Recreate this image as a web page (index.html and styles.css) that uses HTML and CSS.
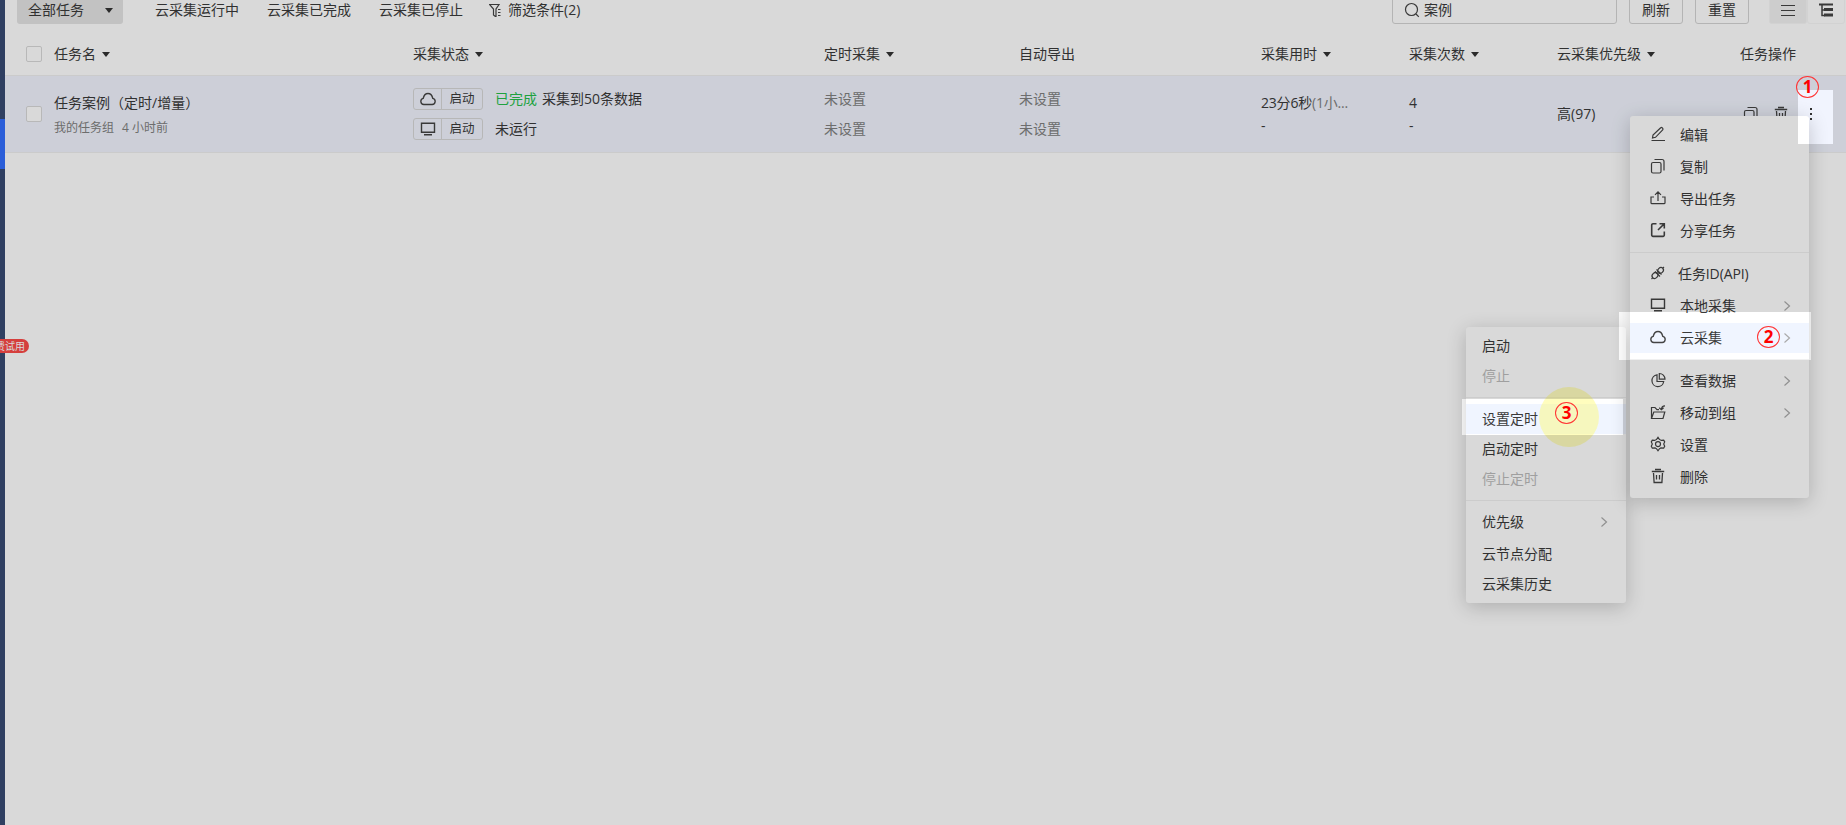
FILE: index.html
```html
<!DOCTYPE html>
<html lang="zh-CN">
<head>
<meta charset="UTF-8">
<meta name="viewport" content="width=device-width, initial-scale=1.0">
<title>任务列表</title>
<link rel="stylesheet" href="styles.css">
</head>
<body>

<!-- 图标 -->
<svg class="icon-defs" width="0" height="0">
    <symbol id="i-edit" viewBox="0 0 16 16"><path d="M2.500 12l.5-3L10.700 1.800a1 1 0 0 1 1.400 0l.6.6a1 1 0 0 1 0 1.400L5.500 11.300zM1.500 14.500h13.500"/></symbol>
    <symbol id="i-copy" viewBox="0 0 16 16"><rect x="1.500" y="4.500" width="9.500" height="10.500" rx="1.500"/><path d="M4.500 1.500h7.500a2 2 0 0 1 2 2v9"/></symbol>
    <symbol id="i-export" viewBox="0 0 16 16"><path d="M4 7H1v5.700a1 1 0 0 0 1 1h12a1 1 0 0 0 1-1V7h-3M8 11V2M5 4.800L8 1.800l3 3"/></symbol>
    <symbol id="i-share" viewBox="0 0 16 16"><path d="M6.500 1.800H3a1.300 1.300 0 0 0-1.300 1.300v10A1.300 1.300 0 0 0 3 14.400h10a1.300 1.300 0 0 0 1.300-1.300V9.500M9.500 1.800h4.800v4.700M14 2L8 8" stroke-width="1.600"/></symbol>
    <symbol id="i-api" viewBox="0 0 16 16"><ellipse cx="5" cy="10.500" rx="3.200" ry="2.600" transform="rotate(-45 5 10.500)"/><ellipse cx="10.500" cy="5.500" rx="3.200" ry="2.600" transform="rotate(-45 10.500 5.500)"/><path d="M1.500 14l1.300-1.300M12.800 3.200L14 2M5 6.500l5 5M6.500 4.500l5 5"/></symbol>
    <symbol id="i-pc" viewBox="0 0 16 16"><path d="M1.500 2.200h13v9h-13zM4 13.800h8" stroke-width="1.400"/></symbol>
    <symbol id="i-cloud" viewBox="0 0 16 16"><path d="M3.800 13.500a3.100 3.100 0 0 1-.6-6.100C4 4 5.800 2.500 8 2.500s4 1.500 4.800 4.900a3.100 3.100 0 0 1-.6 6.100z" stroke-width="1.400"/></symbol>
    <symbol id="i-pie" viewBox="0 0 16 16"><path d="M7 2.800a5.900 5.900 0 1 0 6.700 6.700H7z"/><path d="M9.300 1.500v5.700H15a5.700 5.700 0 0 0-5.700-5.700z"/></symbol>
    <symbol id="i-move" viewBox="0 0 16 16"><path d="M1.500 14.500V3.500H5l2 2.200h2M1.500 14.500l2.300-6.500H14.800L13 14.500zM15 1.800c-2.200 0-3.500.8-3.500 3.700M9.200 3.800l2.200 2 2.200-2"/></symbol>
    <symbol id="i-gear" viewBox="0 0 16 16"><path d="M6.500 3.500L8 1.400l1.500 2.100a5 5 0 0 1 1.600.9l2.600-.2 1 1.700-1 2.200 1 2.200-1 1.700-2.600-.2a5 5 0 0 1-1.600.9L8 14.800l-1.500-2.100a5 5 0 0 1-1.600-.9l-2.600.2-1-1.700 1-2.200-1-2.200 1-1.700 2.600.2a5 5 0 0 1 1.600-.9z"/><circle cx="8" cy="8.100" r="2.500"/></symbol>
    <symbol id="i-trash" viewBox="0 0 16 16"><path d="M1.800 3.500h12.400M5 1.500h6M3.500 5l.6 9.500h7.800l.6-9.500M6.500 7v4.500M9.500 7v4.500" stroke-width="1.300"/></symbol>
    <symbol id="i-filter" viewBox="0 0 14 14"><path d="M.5 1.500h9.500L7 6v8L4.500 12V6zM9 6.500h2.500M9 9.500h2.500M9 12.500h2.500"/></symbol>
    <symbol id="i-search" viewBox="0 0 16 16"><circle cx="7.500" cy="7.500" r="6"/><path d="M12 12l2.800 2.800"/></symbol>
    <symbol id="i-arrow" viewBox="0 0 8 12"><path d="M1.500 1.500L6.500 6l-5 4.500"/></symbol>
</svg>

<div class="page">
    <div class="sidebar"><div class="sidebar-active"></div></div>

    <div class="main">
        <!-- 工具栏 -->
        <div class="toolbar">
            <div class="select">全部任务<span class="caret"></span></div>
            <div class="tabs">
                <span>云采集运行中</span>
                <span>云采集已完成</span>
                <span>云采集已停止</span>
            </div>
            <div class="filter"><svg class="filter-icon"><use href="#i-filter"/></svg>筛选条件(2)</div>
            <div class="search"><svg class="icon"><use href="#i-search"/></svg>案例</div>
            <div class="btn">刷新</div>
            <div class="btn">重置</div>
            <div class="view-toggle">
                <div class="view active"><svg width="14" height="14"><path d="M0 2.500h14M0 7.500h14M0 12.500h14"/></svg></div>
                <div class="view"><svg width="14" height="14"><path d="M0 1.500h14" stroke-width="2"/><path d="M3 2v10.500h3M3 7h3" stroke-width="1.500"/><path d="M5 6.500h9M5 12h9" stroke-width="3"/></svg></div>
            </div>
        </div>

        <!-- 表头 -->
        <div class="grid thead">
            <div class="check-cell"><span class="checkbox"></span></div>
            <div>任务名<span class="caret"></span></div>
            <div>采集状态<span class="caret"></span></div>
            <div>定时采集<span class="caret"></span></div>
            <div>自动导出</div>
            <div>采集用时<span class="caret"></span></div>
            <div>采集次数<span class="caret"></span></div>
            <div>云采集优先级<span class="caret"></span></div>
            <div>任务操作</div>
        </div>

        <!-- 任务行 -->
        <div class="grid row">
            <div class="check-cell"><span class="checkbox"></span></div>
            <div class="name-cell">
                <div class="task-name">任务案例（定时/增量）</div>
                <div class="task-sub"><span>我的任务组</span><span>4 小时前</span></div>
            </div>
            <div class="lines">
                <div class="status">
                    <div class="run"><span class="run-icon"><svg class="icon"><use href="#i-cloud"/></svg></span><span class="run-text">启动</span></div>
                    <span class="done">已完成</span><span>采集到50条数据</span>
                </div>
                <div class="status">
                    <div class="run"><span class="run-icon"><svg class="icon"><use href="#i-pc"/></svg></span><span class="run-text">启动</span></div>
                    <span>未运行</span>
                </div>
            </div>
            <div class="lines muted"><div>未设置</div><div>未设置</div></div>
            <div class="lines muted"><div>未设置</div><div>未设置</div></div>
            <div class="lines tight"><div class="duration">23分6秒<span class="muted">(1小...</span></div><div>-</div></div>
            <div class="lines tight"><div>4</div><div>-</div></div>
            <div>高(97)</div>
            <div class="ops">
                <svg class="icon"><use href="#i-copy"/></svg>
                <svg class="icon"><use href="#i-trash"/></svg>
                <span class="dots"><i></i><i></i><i></i></span>
            </div>
        </div>
    </div>
</div>

<div class="trial">费试用</div>

<!-- 云采集子菜单 -->
<div class="menu submenu">
    <div class="item">启动</div>
    <div class="item disabled">停止</div>
    <div class="divider"></div>
    <div class="item hover">设置定时</div>
    <div class="item">启动定时</div>
    <div class="item disabled">停止定时</div>
    <div class="divider"></div>
    <div class="item spaced">优先级<svg class="arrow"><use href="#i-arrow"/></svg></div>
    <div class="item">云节点分配</div>
    <div class="item">云采集历史</div>
</div>

<!-- 任务操作菜单 -->
<div class="menu task-menu">
    <div class="item"><svg class="icon"><use href="#i-edit"/></svg>编辑</div>
    <div class="item"><svg class="icon"><use href="#i-copy"/></svg>复制</div>
    <div class="item"><svg class="icon"><use href="#i-export"/></svg>导出任务</div>
    <div class="item"><svg class="icon"><use href="#i-share"/></svg>分享任务</div>
    <div class="divider"></div>
    <div class="item api"><svg class="icon"><use href="#i-api"/></svg>任务ID(API)</div>
    <div class="item"><svg class="icon"><use href="#i-pc"/></svg>本地采集<svg class="arrow"><use href="#i-arrow"/></svg></div>
    <div class="item hover"><svg class="icon"><use href="#i-cloud"/></svg>云采集<svg class="arrow"><use href="#i-arrow"/></svg></div>
    <div class="divider"></div>
    <div class="item"><svg class="icon"><use href="#i-pie"/></svg>查看数据<svg class="arrow"><use href="#i-arrow"/></svg></div>
    <div class="item"><svg class="icon"><use href="#i-move"/></svg>移动到组<svg class="arrow"><use href="#i-arrow"/></svg></div>
    <div class="item"><svg class="icon"><use href="#i-gear"/></svg>设置</div>
    <div class="item"><svg class="icon"><use href="#i-trash"/></svg>删除</div>
</div>

<div class="pointer"></div>

<!-- 遮罩，三个步骤处镂空 -->
<svg class="mask" viewBox="0 0 1846 825">
    <path fill-rule="evenodd" d="M0 0H1846V825H0zM1798 90V144H1833V90zM1619 312V360H1811V312zM1462 399V435H1623V399z"/>
</svg>

<div class="step step-1">1</div>
<div class="step step-2">2</div>
<div class="step step-3">3</div>

</body>
</html>
```
FILE: styles.css
```css
* {
    box-sizing: border-box;
}

body {
    margin: 0;
    width: 1846px;
    height: 825px;
    overflow: hidden;
    position: relative;
    background: #fff;
    color: #3a3a3a;
    font: 14px/20px "Open Sans", "Noto Sans CJK SC", sans-serif;
}

svg {
    fill: none;
    stroke: #444;
    stroke-width: 1.2;
    flex: none;
}

.icon-defs {
    position: absolute;
}

.icon {
    width: 16px;
    height: 16px;
}

.page {
    display: flex;
    height: 825px;
}

.sidebar {
    width: 5px;
    padding-top: 119px;
    background: #384b72;
}

.sidebar-active {
    height: 50px;
    background: #336fff;
}

.main {
    flex: 1;
}

/* 工具栏 */
.toolbar {
    display: flex;
    align-items: center;
    height: 28px;
    margin-top: -4px;
    padding: 0 1px 0 12px;
}

.select {
    display: flex;
    align-items: center;
    justify-content: space-between;
    width: 106px;
    height: 28px;
    padding: 0 10px 0 11px;
    border-radius: 3px;
    background: #e4e4e4;
}

.caret {
    display: inline-block;
    border: 4px solid transparent;
    border-top: 5px solid #333;
    border-bottom: 0;
}

.tabs {
    display: flex;
    gap: 28px;
    margin-left: 32px;
}

.filter {
    display: flex;
    align-items: center;
    gap: 5px;
    margin-left: 26px;
}

.filter-icon {
    width: 14px;
    height: 14px;
}

.search {
    display: flex;
    align-items: center;
    gap: 4px;
    width: 225px;
    height: 28px;
    margin-left: auto;
    padding-left: 11px;
    border: 1px solid #d4d4d4;
    border-radius: 3px;
}

.btn {
    width: 54px;
    height: 28px;
    margin-left: 12px;
    border: 1px solid #d4d4d4;
    border-radius: 3px;
    line-height: 26px;
    text-align: center;
}

.view-toggle {
    display: flex;
    margin-left: 20px;
}

.view {
    display: flex;
    align-items: center;
    justify-content: center;
    width: 38px;
    height: 28px;
    border: 1px solid #f7f7f7;
    border-radius: 3px;
}

.view.active {
    background: #f1f1f1;
}

/* 表格 */
.grid {
    display: grid;
    grid-template-columns: 49px 359px 411px 195px 242px 148px 148px 183px 1fr;
    align-items: center;
}

.thead {
    height: 52px;
    padding-top: 9px;
    border-bottom: 1px solid #efefef;
}

.thead .caret {
    margin-left: 6px;
    vertical-align: 2px;
}

.row {
    height: 77px;
    background: #f1f4fe;
    border-bottom: 1px solid #efefef;
}

.check-cell {
    padding-left: 21px;
}

.checkbox {
    display: block;
    width: 16px;
    height: 16px;
    border: 1px solid #d9d9d9;
    border-radius: 2px;
    background: #fff;
}

.name-cell {
    padding-top: 3px;
}

.task-sub {
    display: flex;
    gap: 8px;
    margin-top: 5px;
    font-size: 12px;
    color: #808080;
}

.lines {
    display: flex;
    flex-direction: column;
    gap: 10px;
}

.tight {
    gap: 3px;
}

.duration {
    letter-spacing: -.2px;
}

.muted {
    color: #808080;
}

.status {
    display: flex;
    align-items: center;
    height: 20px;
    gap: 5px;
}

.run {
    display: flex;
    width: 70px;
    height: 22px;
    margin-right: 7px;
    border: 1px solid #d8d8d8;
    border-radius: 3px;
    font-size: 12.5px;
}

.run-icon {
    display: flex;
    align-items: center;
    justify-content: center;
    width: 28px;
    border-right: 1px solid #d8d8d8;
}

.run-text {
    flex: 1;
    text-align: center;
}

.done {
    color: #25be4b;
}

.ops {
    display: flex;
    align-items: center;
    gap: 14px;
    padding-left: 3px;
}

.ops .icon {
    margin-top: -1px;
}

.dots {
    display: flex;
    flex-direction: column;
    gap: 3px;
    padding-left: 7px;
}

.dots i {
    width: 2px;
    height: 2px;
    background: #333;
}

.trial {
    position: absolute;
    left: -10px;
    top: 339px;
    width: 39px;
    height: 14px;
    padding-right: 4px;
    border-radius: 0 7px 7px 0;
    background: #fb4a48;
    color: #fff;
    font-size: 10px;
    line-height: 14px;
    text-align: right;
}

/* 菜单 */
.menu {
    position: absolute;
    display: flex;
    flex-direction: column;
    border-radius: 3px;
    background: #fff;
    box-shadow: 0 4px 20px rgba(0, 0, 0, .2);
}

.task-menu {
    left: 1630px;
    top: 116px;
    width: 179px;
    padding: 3px 0 5px;
}

.task-menu .icon {
    margin-top: -2px;
}

.submenu {
    left: 1466px;
    top: 327px;
    width: 160px;
    padding: 4px 0;
}

.item {
    display: flex;
    align-items: center;
    height: 30px;
}

.task-menu .item {
    margin: 1px 0;
    padding: 0 18px 0 20px;
    gap: 14px;
}

.task-menu .api {
    gap: 12px;
    letter-spacing: -.1px;
}

.submenu .item {
    padding: 0 18px 0 16px;
}

.submenu .spaced {
    margin-bottom: 2px;
}

.item.hover {
    background: #f0f5ff;
}

.item.disabled {
    color: #bbb;
}

.arrow {
    width: 8px;
    height: 12px;
    margin-left: auto;
    stroke: #aaa;
}

.divider {
    height: 1px;
    margin: 6px 0;
    background: #f0f0f0;
}

.task-menu .divider {
    margin: 5px 0;
}

/* 步骤引导 */
.pointer {
    position: absolute;
    left: 1539px;
    top: 387px;
    width: 60px;
    height: 60px;
    border-radius: 50%;
    background: rgba(255, 250, 100, .42);
}

.mask {
    position: absolute;
    left: 0;
    top: 0;
    width: 1846px;
    height: 825px;
    fill: rgba(0, 0, 0, .15);
    stroke: none;
}

.step {
    position: absolute;
    width: 23px;
    height: 22px;
    border: 1px solid #f33;
    border-radius: 50%;
    color: #f00;
    font-size: 17px;
    font-weight: 700;
    line-height: 20px;
    text-align: center;
}

.step-1 {
    left: 1796px;
    top: 76px;
}

.step-2 {
    left: 1757px;
    top: 326px;
}

.step-3 {
    left: 1555px;
    top: 402px;
}
```
